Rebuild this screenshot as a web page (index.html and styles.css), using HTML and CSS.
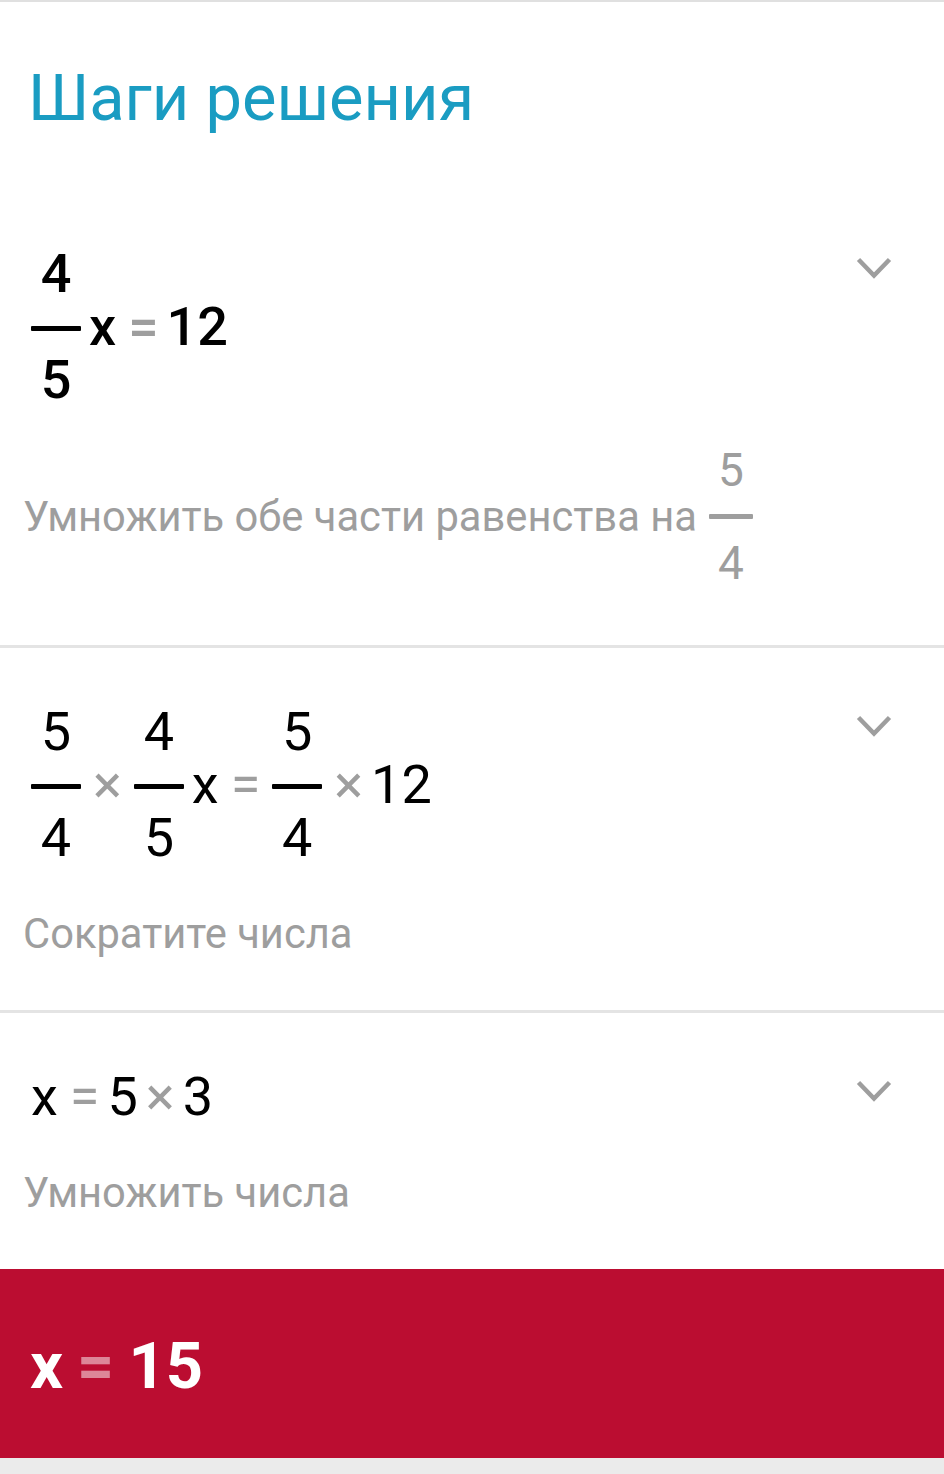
FILE: index.html
```html
<!DOCTYPE html>
<html lang="ru">
<head>
    <meta charset="UTF-8">
    <meta name="viewport" content="width=device-width, initial-scale=1.0">
    <title>Шаги решения</title>
    <link rel="stylesheet" href="styles.css">
</head>
<body>

    <div class="sheet">
        <h1 class="title">Шаги решения</h1>

        <div class="step">
            <div class="step-head">
                <div class="expr expr-bold">
                    <span class="frac"><span>4</span><i class="bar"></i><span>5</span></span>
                    <span class="var">x</span>
                    <span class="op eq">=</span>
                    <span>12</span>
                </div>
                <svg class="chevron" viewBox="0 0 36 22" aria-hidden="true">
                    <polyline points="2.5,2.5 18,18.5 33.5,2.5" />
                </svg>
            </div>
            <div class="hint hint-frac">
                <span>Умножить обе части равенства на</span>
                <span class="frac frac-small"><span>5</span><i class="bar"></i><span>4</span></span>
            </div>
        </div>

        <div class="step">
            <div class="step-head">
                <div class="expr">
                    <span class="frac"><span>5</span><i class="bar"></i><span>4</span></span>
                    <span class="op">×</span>
                    <span class="frac"><span>4</span><i class="bar"></i><span>5</span></span>
                    <span class="var">x</span>
                    <span class="op eq">=</span>
                    <span class="frac"><span>5</span><i class="bar"></i><span>4</span></span>
                    <span class="op">×</span>
                    <span>12</span>
                </div>
                <svg class="chevron" viewBox="0 0 36 22" aria-hidden="true">
                    <polyline points="2.5,2.5 18,18.5 33.5,2.5" />
                </svg>
            </div>
            <div class="hint">Сократите числа</div>
        </div>

        <div class="step">
            <div class="step-head">
                <div class="expr">
                    <span>x</span>
                    <span class="op eq">=</span>
                    <span>5</span>
                    <span class="op">×</span>
                    <span>3</span>
                </div>
                <svg class="chevron" viewBox="0 0 36 22" aria-hidden="true">
                    <polyline points="2.5,2.5 18,18.5 33.5,2.5" />
                </svg>
            </div>
            <div class="hint">Умножить числа</div>
        </div>

        <div class="answer">
            <span>x</span>
            <span class="op">=</span>
            <span>15</span>
        </div>
    </div>

</body>
</html>
```

FILE: styles.css
```css
body {
    margin: 0;
    background: #ebebeb;
    font-family: Roboto, "Noto Sans", sans-serif;
}

.sheet {
    background: #fff;
    border-top: 2px solid #e0e0e0;
}

.title {
    margin: 0;
    padding: 65px 28px 60px;
    font-size: 65px;
    line-height: 63px;
    font-weight: 400;
    color: #1a9cc2;
}

.step {
    padding: 57px 52px 55px 23px;
}

.step + .step {
    border-top: 3px solid #e4e4e4;
}

.step-head {
    display: flex;
    justify-content: space-between;
    align-items: flex-start;
    padding-left: 8px;
}

.expr {
    display: flex;
    align-items: center;
    font-size: 54px;
    line-height: 54px;
    color: #000;
}

.expr-bold {
    font-weight: 500;
}

.frac {
    display: flex;
    flex-direction: column;
    align-items: center;
    width: 50px;
    margin-right: 4px;
}

.op + .frac {
    margin-left: 4px;
}

.bar {
    display: block;
    width: 100%;
    height: 5px;
    margin: 25px 0 22px;
    background: currentColor;
    border-radius: 1px;
}

.var {
    margin-left: 4px;
}

.op {
    color: #9e9e9e;
    margin: 0 8px;
}

.op.eq {
    margin: 0 8px 0 12px;
}

.chevron {
    flex: none;
    width: 36px;
    height: 22px;
    margin-top: 10px;
}

.chevron polyline {
    fill: none;
    stroke: #9e9e9e;
    stroke-width: 4.5;
}

.hint {
    margin-top: 48px;
    font-size: 41.7px;
    line-height: 42px;
    color: #9e9e9e;
}

.hint-frac {
    display: flex;
    align-items: center;
    margin-top: 40px;
    margin-bottom: 4px;
}

.frac-small {
    width: 44px;
    margin-left: 12px;
    font-size: 46px;
    line-height: 46px;
}

.frac-small .bar {
    margin: 21px 0;
}

.answer {
    display: flex;
    align-items: center;
    padding: 65px 30px 59px;
    background: #bb0d31;
    color: #fff;
    font-size: 65px;
    line-height: 65px;
    font-weight: 700;
}

.answer .op {
    color: rgba(255, 255, 255, 0.5);
    margin: 0 14px;
}
```
